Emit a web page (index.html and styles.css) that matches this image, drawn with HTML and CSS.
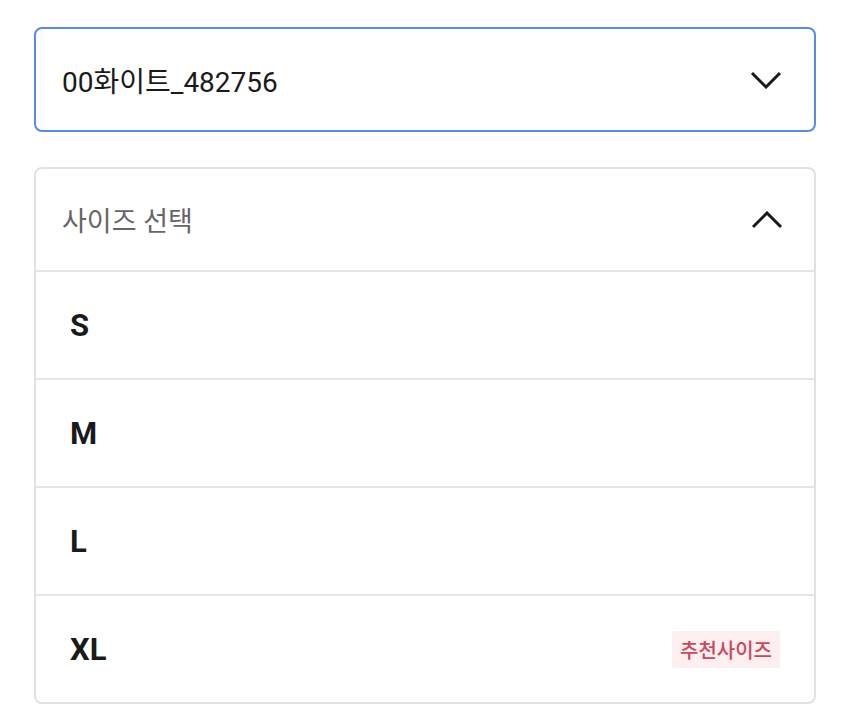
FILE: index.html
```html
<!DOCTYPE html>
<html lang="ko">
<head>
    <meta charset="UTF-8">
    <meta name="viewport" content="width=device-width, initial-scale=1.0">
    <link rel="stylesheet" href="styles.css">
    <title>옵션 선택</title>
</head>
<body>
    <div class="page">
        <!-- color select -->
        <div class="select">
            <span class="select-value">00화이트_482756</span>
            <svg class="chev" width="32" height="18" viewBox="0 0 32 18">
                <polyline points="2,2 16,16 30,2" fill="none" stroke="#1a1a1a" stroke-width="3"/>
            </svg>
        </div>

        <!-- size list -->
        <div class="sizes">
            <div class="sizes-head">
                <span class="sizes-title">사이즈 선택</span>
                <svg class="chev" width="32" height="18" viewBox="0 0 32 18">
                    <polyline points="2,16 16,2 30,16" fill="none" stroke="#1a1a1a" stroke-width="3"/>
                </svg>
            </div>
            <div class="size-row"><span class="size-name">S</span></div>
            <div class="size-row"><span class="size-name">M</span></div>
            <div class="size-row"><span class="size-name">L</span></div>
            <div class="size-row">
                <span class="size-name">XL</span>
                <span class="badge">추천사이즈</span>
            </div>
        </div>
    </div>
</body>
</html>
```

FILE: styles.css
```css
body {
    margin: 0;
    background: #fff;
    font-family: Roboto, "Noto Sans CJK KR", sans-serif;
    color: #1a1a1a;
}
.page {
    padding: 27px 34px;
    width: 782px;
}
.select {
    height: 105px;
    box-sizing: border-box;
    border: 2px solid #5b8ce0;
    border-radius: 8px;
    display: flex;
    align-items: center;
    justify-content: space-between;
    padding: 0 32px 0 26px;
}
.select-value {
    font-size: 28px;
}
.sizes {
    margin-top: 35px;
    border: 2px solid #e1e1e1;
    border-radius: 8px;
}
.sizes-head {
    height: 101px;
    display: flex;
    align-items: center;
    justify-content: space-between;
    padding: 0 31px 0 26px;
}
.sizes-title {
    font-size: 27px;
    color: #666;
}
.size-row {
    height: 106px;
    border-top: 2px solid #e6e6e6;
    display: flex;
    align-items: center;
    justify-content: space-between;
    padding: 0 34px 0 34px;
}
.size-name {
    font-size: 31px;
    font-weight: bold;
}
.badge {
    background: #fdeef0;
    color: #c8485c;
    font-size: 20px;
    font-weight: 500;
    padding: 4px 8px;
    border-radius: 3px;
}
```
